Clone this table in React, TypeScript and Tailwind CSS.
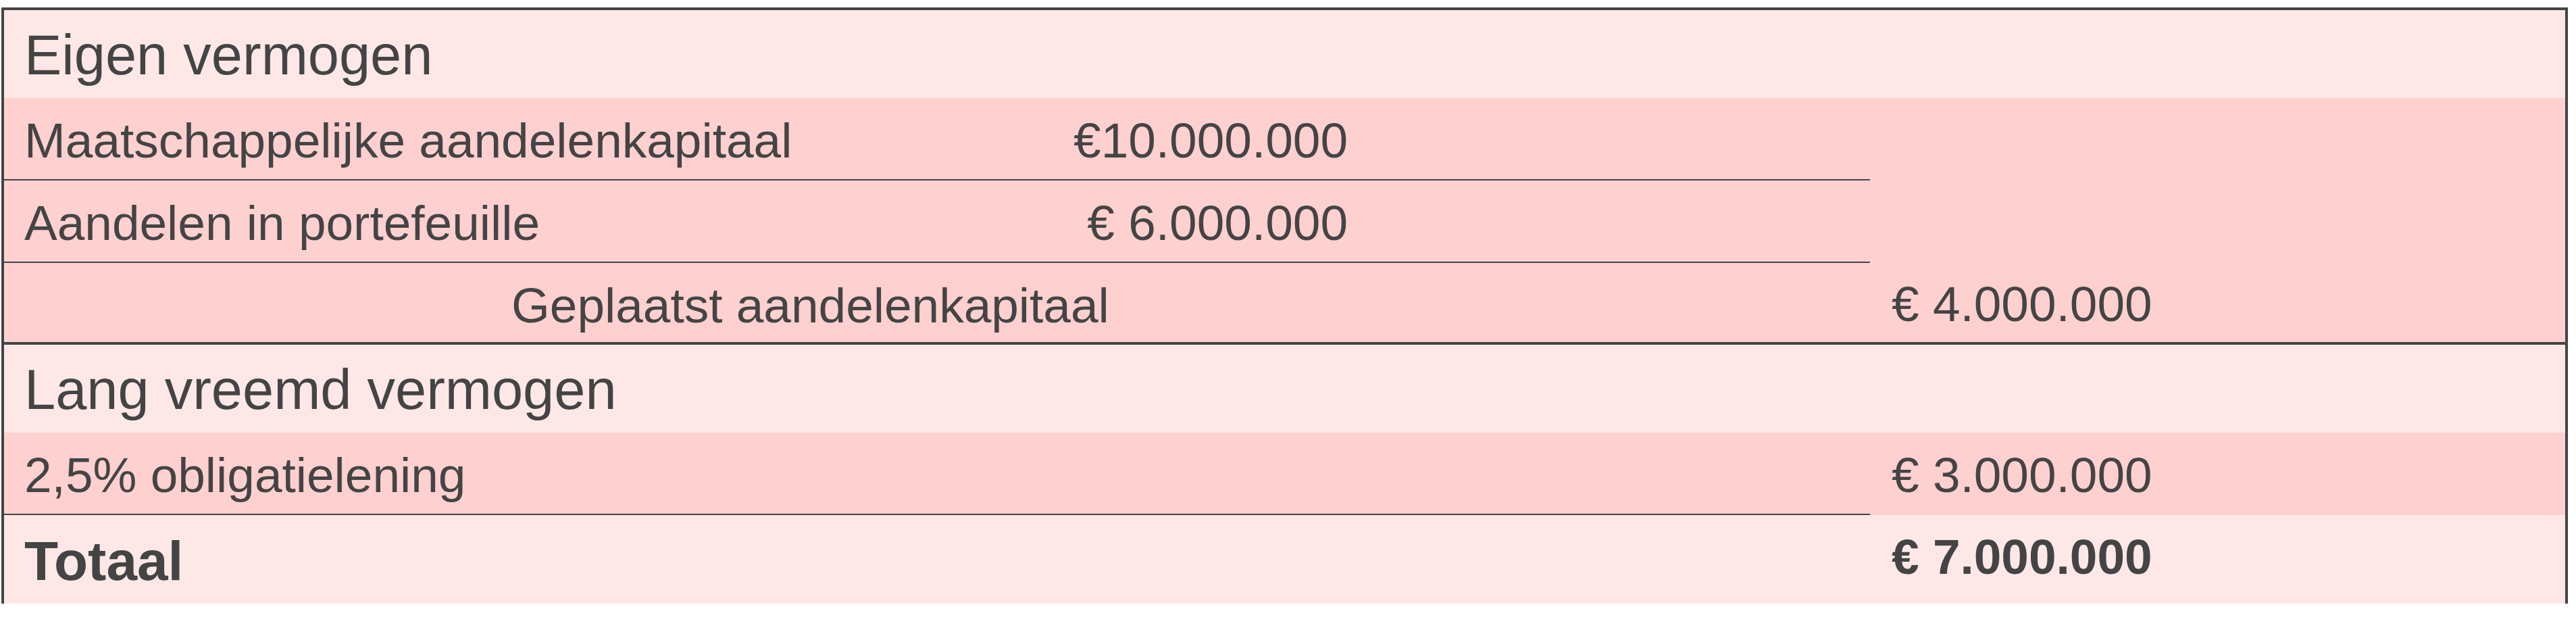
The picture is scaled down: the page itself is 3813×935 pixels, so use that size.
type Line = {
  label: string;
  amount?: string;
  total?: string;
};

const capitalLines: Line[] = [
  { label: "Maatschappelijke aandelenkapitaal", amount: "€10.000.000" },
  { label: "Aandelen in portefeuille", amount: "€ 6.000.000" },
];

const SectionHeader = ({ title }: { title: string }) => (
  <div className="h-[130px] bg-[#fde8e7] pl-[30px] pt-[25px] text-[83px] leading-none">
    {title}
  </div>
);

const DetailRow = ({ label, amount, total }: Line) => (
  <div className="grid grid-cols-[2762px_1fr] h-[122px] bg-[#fed0cf]">
    <div className="grid grid-cols-[1989px_1fr] border-b-2 border-[#444]">
      <div className="flex justify-between pl-[30px] pt-[26px] text-[73px] leading-none whitespace-nowrap">
        <span>{label}</span>
        {amount && <span>{amount}</span>}
      </div>
      <div />
    </div>
    <div className="pl-[32px] pt-[26px] text-[73px] leading-none whitespace-nowrap">
      {total}
    </div>
  </div>
);

export default function App() {
  return (
    <div className="w-[3813px] h-[935px] bg-white pl-[2px] pt-[11px]">
      <div className="w-[3799px] border-x-4 border-t-4 border-[#444] text-[#444] font-['Liberation_Sans',Arial,sans-serif]">
        <SectionHeader title="Eigen vermogen" />
        {capitalLines.map(line => (
          <DetailRow key={line.label} {...line} />
        ))}
        <div className="grid grid-cols-[2762px_1fr] h-[121px] bg-[#fed0cf] border-b-4 border-[#444] text-[73px] leading-none whitespace-nowrap">
          <div className="pl-[751px] pt-[26px]">Geplaatst aandelenkapitaal</div>
          <div className="pl-[32px] pt-[24px]">€ 4.000.000</div>
        </div>

        <SectionHeader title="Lang vreemd vermogen" />
        <DetailRow label="2,5% obligatielening" total="€ 3.000.000" />
        <div className="grid grid-cols-[2762px_1fr] h-[131px] bg-[#fde8e7] font-bold leading-none whitespace-nowrap">
          <div className="pl-[30px] pt-[27px] text-[82px]">Totaal</div>
          <div className="pl-[32px] pt-[25px] text-[73px]">€ 7.000.000</div>
        </div>
      </div>
    </div>
  );
}
